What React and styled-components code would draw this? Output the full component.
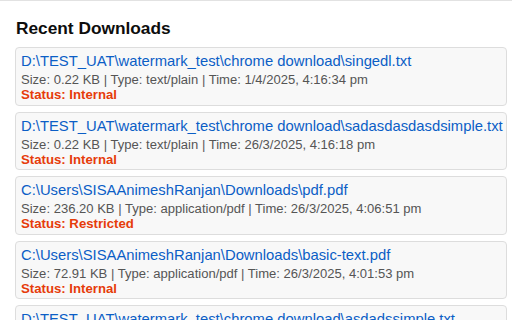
import React from "react";
import styled, { createGlobalStyle } from "styled-components";

const Global = createGlobalStyle`
  html, body { margin: 0; padding: 0; background: #fff; }
  body { font-family: "Liberation Sans", Arial, sans-serif; }
`;

const Page = styled.div`
  width: 512px;
  height: 320px;
  overflow: hidden;
  border-top: 1px solid #e2e2e2;
  box-sizing: border-box;
  padding: 0 5px 0 15px;
`;

const Title = styled.h2`
  margin: 17px 0 8px 1px;
  font-size: 17.3px;
  font-weight: bold;
  color: #0d0d0d;
  line-height: 21px;
`;

const List = styled.div`
  display: flex;
  flex-direction: column;
  gap: 6px;
`;

const Card = styled.div`
  border: 1px solid #dddddd;
  border-radius: 4px;
  background: #f8f8f8;
  padding: 3px 5px 2.5px;
`;

const Path = styled.div`
  color: #0b5ec6;
  white-space: nowrap;
  font-size: 14.8px;
  line-height: 20px;
`;

const Meta = styled.div`
  color: #555;
  white-space: nowrap;
  font-size: 13.05px;
  line-height: 17px;
`;

const Status = styled.div`
  color: #e63c0a;
  font-weight: bold;
  font-size: 13.2px;
  line-height: 14px;
`;

const items = [
  { path: "D:\\TEST_UAT\\watermark_test\\chrome download\\singedl.txt", size: "0.22 KB", type: "text/plain", time: "1/4/2025, 4:16:34 pm", status: "Internal" },
  { path: "D:\\TEST_UAT\\watermark_test\\chrome download\\sadasdasdasdsimple.txt", size: "0.22 KB", type: "text/plain", time: "26/3/2025, 4:16:18 pm", status: "Internal" },
  { path: "C:\\Users\\SISAAnimeshRanjan\\Downloads\\pdf.pdf", size: "236.20 KB", type: "application/pdf", time: "26/3/2025, 4:06:51 pm", status: "Restricted" },
  { path: "C:\\Users\\SISAAnimeshRanjan\\Downloads\\basic-text.pdf", size: "72.91 KB", type: "application/pdf", time: "26/3/2025, 4:01:53 pm", status: "Internal" },
  { path: "D:\\TEST_UAT\\watermark_test\\chrome download\\asdadssimple.txt", size: "0.22 KB", type: "text/plain", time: "26/3/2025, 3:58:10 pm", status: "Internal" },
];

export default function App() {
  return (
    <>
      <Global />
      <Page>
        <Title>Recent Downloads</Title>
        <List>
          {items.map((it, i) => (
            <Card key={i}>
              <Path>{it.path}</Path>
              <Meta>Size: {it.size} | Type: {it.type} | Time: {it.time}</Meta>
              <Status>Status: {it.status}</Status>
            </Card>
          ))}
        </List>
      </Page>
    </>
  );
}
